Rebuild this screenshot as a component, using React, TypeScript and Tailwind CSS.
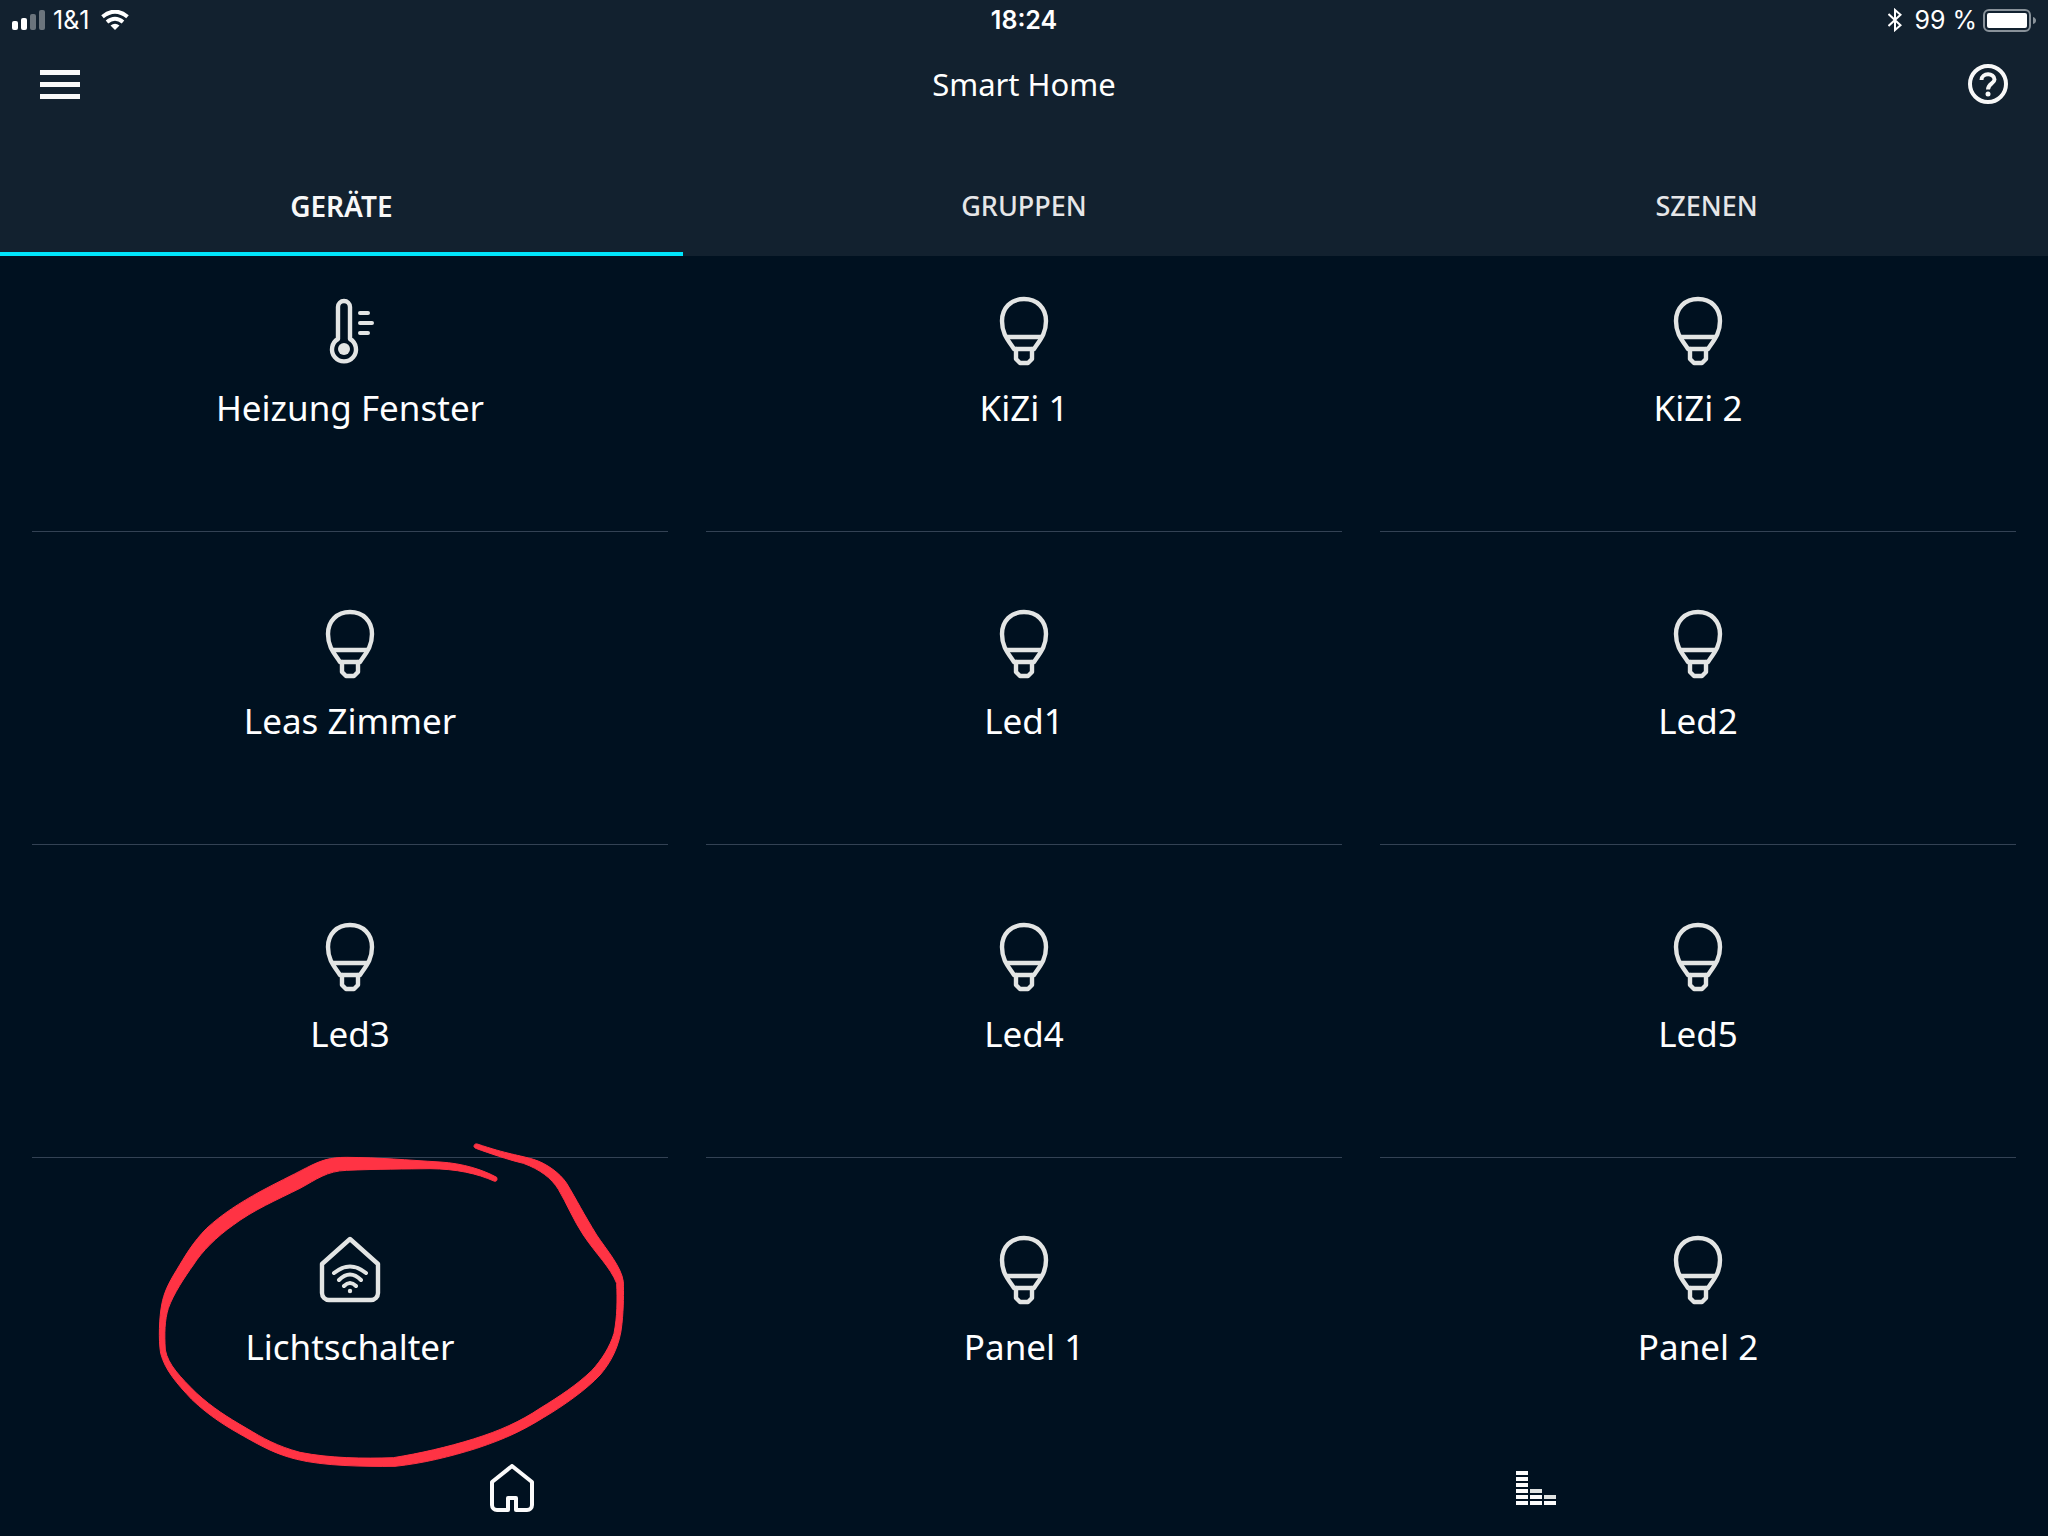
import { clsx } from "clsx";
import React, { useState } from "react";

type DeviceKind = "bulb" | "thermostat" | "switch";

interface Device {
  name: string;
  kind: DeviceKind;
  marked?: boolean;
}

const TABS = ["GERÄTE", "GRUPPEN", "SZENEN"];

const DEVICES: Device[] = [
  { name: "Heizung Fenster", kind: "thermostat" },
  { name: "KiZi 1", kind: "bulb" },
  { name: "KiZi 2", kind: "bulb" },
  { name: "Leas Zimmer", kind: "bulb" },
  { name: "Led1", kind: "bulb" },
  { name: "Led2", kind: "bulb" },
  { name: "Led3", kind: "bulb" },
  { name: "Led4", kind: "bulb" },
  { name: "Led5", kind: "bulb" },
  { name: "Lichtschalter", kind: "switch", marked: true },
  { name: "Panel 1", kind: "bulb" },
  { name: "Panel 2", kind: "bulb" },
];

function DeviceIcon({ kind }: { kind: DeviceKind }) {
  return (
    <svg
      viewBox="0 0 80 80"
      className="size-20 text-[#e3e5e4]"
      fill="none"
      stroke="currentColor"
      strokeWidth={4.4}
      strokeLinecap="round"
      strokeLinejoin="round"
      aria-hidden="true"
    >
      {kind === "bulb" && (
        <>
          <path d="M40 7C53 7 62 16 62 29C62 42 56 48 50 57H30C24 48 18 42 18 29C18 16 27 7 40 7Z" />
          <path d="M23 45H57M32 57V67L36 71H44L48 67V57" />
        </>
      )}
      {kind === "thermostat" && (
        <>
          <path d="M28 47V15a6 6 0 0 1 12 0V47a12 12 0 1 1-12 0Z" />
          <circle cx="34" cy="57" r="6" fill="currentColor" stroke="none" />
          <path d="M50 21H58M50 31H62M50 41H58" strokeWidth={4} />
        </>
      )}
      {kind === "switch" && (
        <>
          <path d="M12 33L40 8L68 33V62a7 7 0 0 1-7 7H19a7 7 0 0 1-7-7Z" />
          <path d="M24 42Q40 29 56 42M29 49Q40 38 51 49M34 55Q40 49 46 55" strokeWidth={4} />
          <circle cx="40" cy="60" r="2.2" fill="currentColor" stroke="none" />
        </>
      )}
    </svg>
  );
}

function Scribble() {
  return (
    <svg
      viewBox="0 0 1560 1110"
      className="pointer-events-none absolute -top-[38px] left-[98px] h-[370px] w-[520px] text-[#ff3344]"
      fill="currentColor"
      stroke="currentColor"
      strokeWidth={3}
      strokeLinejoin="round"
      aria-hidden="true"
    >
      <path d="M1100 172C1060 150 1000 130 930 126C830 120 750 113 650 112C600 112 575 120 530 143C480 169 440 188 390 215C330 248 275 283 230 325C190 365 165 408 140 450C115 490 101 520 95 555C88 590 85 660 92 700C105 750 140 790 185 838C240 890 290 920 340 948C400 982 440 1003 500 1018C580 1038 700 1040 795 1039C880 1030 960 1010 1040 985C1130 955 1180 930 1240 893C1300 858 1370 808 1410 765C1440 730 1470 680 1476 610C1481 560 1481 520 1480 485C1474 440 1430 390 1400 345C1360 280 1340 240 1310 190C1290 160 1250 130 1210 118C1170 106 1130 102 1042 72Q1032 70 1032 80Q1034 84 1040 86C1080 100 1130 118 1180 130C1230 148 1265 175 1285 208C1310 250 1330 300 1360 345C1400 405 1440 440 1460 490C1462 540 1462 590 1452 640C1440 680 1415 720 1385 752C1340 795 1290 828 1230 865C1170 905 1110 932 1030 957C950 982 870 1000 790 1013C700 1016 600 1015 510 997C440 978 400 955 350 925C290 890 250 865 200 820C150 770 115 735 106 690C103 640 104 600 115 565C130 522 165 470 190 435C215 395 260 350 310 315C370 270 440 240 510 205C560 178 590 153 650 151C740 147 830 147 900 146C980 147 1040 160 1094 184Q1104 184 1100 172Z" />
    </svg>
  );
}

function StatusBar() {
  return (
    <div className="flex h-10 items-center font-['Inter',sans-serif] text-[25px] leading-8 text-white">
      <div className="flex flex-1 items-center pl-3">
        <svg viewBox="0 0 33 20" className="h-5 w-[33px]" fill="currentColor" aria-hidden="true">
          <rect x="0" y="11" width="6" height="9" rx="2" />
          <rect x="9" y="8" width="6" height="12" rx="2" />
          <rect x="18" y="4" width="6" height="16" rx="2" className="text-[#6b747c]" />
          <rect x="27" y="0" width="6" height="20" rx="2" className="text-[#6b747c]" />
        </svg>
        <span className="ml-2">1&amp;1</span>
        <svg viewBox="0 0 28 20" className="ml-3 h-5 w-7" fill="none" stroke="currentColor" aria-hidden="true">
          <path d="M1.500 6.800Q14-3.500 26.500 6.800" strokeWidth={4} />
          <path d="M6 12Q14 5.500 22 12" strokeWidth={4} />
          <path d="M14 20L9.500 15.500Q14 12 18.500 15.500Z" fill="currentColor" stroke="none" />
        </svg>
      </div>
      <time className="font-semibold">18:24</time>
      <div className="flex flex-1 items-center justify-end pr-3">
        <svg viewBox="0 0 14 24" className="h-6 w-3.5" fill="none" stroke="currentColor" strokeWidth={2} aria-hidden="true">
          <path d="M0.500 6L12.500 17.200L7 22V2L12.500 6.800L0.500 18" />
        </svg>
        <span className="ml-3">99 %</span>
        <svg viewBox="0 0 53 23" className="ml-1.5 h-[23px] w-[53px]" aria-hidden="true">
          <rect x="1" y="1" width="46" height="21" rx="5" fill="none" stroke="#89929a" strokeWidth={2} />
          <rect x="4" y="4" width="40" height="15" rx="2" fill="#fff" />
          <path d="M50 8Q53 9 53 11.500T50 15Z" fill="#89929a" />
        </svg>
      </div>
    </div>
  );
}

export default function App() {
  const [activeTab, setActiveTab] = useState(TABS[0]);

  return (
    <div className="flex min-h-screen flex-col bg-[#001120] font-['Noto_Sans',sans-serif] text-white">
      <header className="bg-[#12212f]">
        <StatusBar />
        <div className="flex h-[88px] items-center justify-between px-10">
          <button type="button" aria-label="Menü" className="flex w-10 flex-col gap-[7px]">
            <span className="h-[5px] bg-[#f8f8f8]" />
            <span className="h-[5px] bg-[#f8f8f8]" />
            <span className="h-[5px] bg-[#f8f8f8]" />
          </button>
          <h1 className="text-[31px] leading-10">Smart Home</h1>
          <button type="button" aria-label="Hilfe" className="size-10">
            <svg viewBox="0 0 40 40" className="size-10" fill="none" stroke="#f8f8f8" strokeWidth={4}>
              <circle cx="20" cy="20" r="18" />
              <path d="M13.500 16C13.500 8.500 26.500 8.500 26.500 15.500C26.500 19.500 20 19.500 20 25.500" />
              <circle cx="20" cy="30" r="2.500" fill="#f8f8f8" stroke="none" />
            </svg>
          </button>
        </div>
        <div role="tablist" className="mt-7 grid grid-cols-3">
          {TABS.map((tab) => (
            <button
              key={tab}
              type="button"
              role="tab"
              aria-selected={tab === activeTab}
              onClick={() => setActiveTab(tab)}
              className={clsx(
                "h-[100px] border-b-4 pt-1 leading-9",
                tab === activeTab
                  ? "border-[#00e5fb] text-[28px] font-semibold text-[#f8f8f8]"
                  : "border-transparent text-[27px] font-medium text-[#e6e6e8]"
              )}
            >
              {tab}
            </button>
          ))}
        </div>
      </header>

      <main className="flex-1">
        <ul className="grid grid-cols-3 gap-x-[38px] px-8">
          {DEVICES.map((device, i) => (
            <li
              key={device.name}
              className={clsx("relative", i < DEVICES.length - 3 && "border-b border-[#334254]")}
            >
              <button
                type="button"
                className={clsx(
                  "flex w-full flex-col items-center gap-3.5",
                  i < 3 ? "pt-9" : "pt-[73px]",
                  i < DEVICES.length - 3 ? "pb-[101px]" : "pb-[71px]"
                )}
              >
                <DeviceIcon kind={device.kind} />
                <span className="text-[35px] leading-[44px]">{device.name}</span>
              </button>
              {device.marked && <Scribble />}
            </li>
          ))}
        </ul>
      </main>

      <nav className="grid h-24 grid-cols-2">
        <a href="#home" aria-label="Startseite" className="flex items-center justify-center">
          <svg viewBox="0 0 48 48" className="size-12" fill="none" stroke="#fbfbfb" strokeWidth={4} strokeLinejoin="round">
            <path d="M20 46H9a5 5 0 0 1-5-5V18L24 2L44 18V41a5 5 0 0 1-5 5H28V34H20Z" />
          </svg>
        </a>
        <a href="#musik" aria-label="Musik" className="flex items-center justify-center">
          <svg viewBox="0 0 40 34" className="h-[34px] w-10" fill="#fbfbfb">
            {[0, 6, 12, 18, 24, 30].map((y) => (
              <rect key={y} x="0" y={y} width="12" height="4" />
            ))}
            <rect x="14" y="18" width="12" height="4" fill="#dfe2e1" />
            <rect x="14" y="24" width="12" height="4" />
            <rect x="14" y="30" width="12" height="4" />
            <rect x="28" y="24" width="12" height="4" fill="#dfe2e1" />
            <rect x="28" y="30" width="12" height="4" />
          </svg>
        </a>
      </nav>
    </div>
  );
}
